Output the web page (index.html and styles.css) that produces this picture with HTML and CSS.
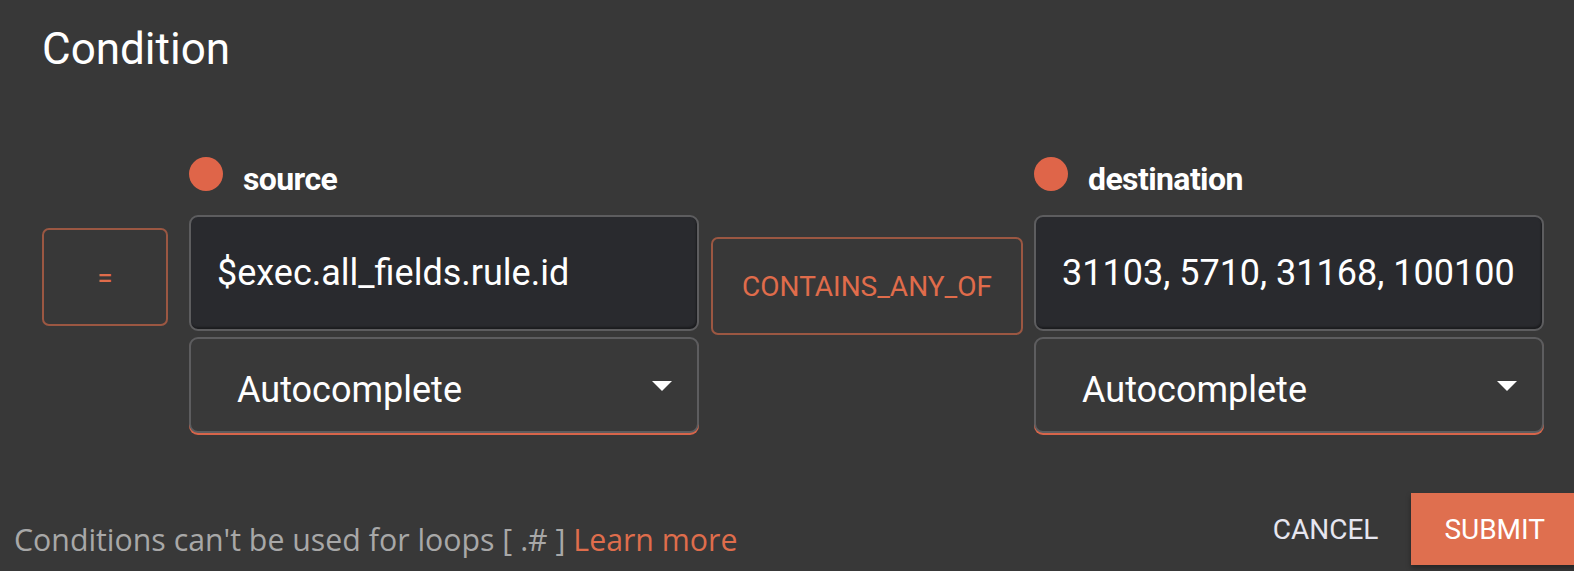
FILE: index.html
```html
<!DOCTYPE html>
<html lang="en">
<head>
<meta charset="utf-8">
<title>Condition</title>
<link rel="stylesheet" href="styles.css">
</head>
<body>
<div class="dialog">
  <h2 class="title">Condition</h2>
  <div class="row">
    <div class="op-box op-eq">=</div>
    <div class="field">
      <div class="label"><span class="dot"></span><span class="label-text">source</span></div>
      <div class="input">$exec.all_fields.rule.id</div>
      <div class="select"><span>Autocomplete</span><svg class="caret" width="20" height="10" viewBox="0 0 20 10"><path d="M0 0 L10 10 L20 0 Z" fill="#ffffff"/></svg></div>
    </div>
    <div class="op-box op-contains">CONTAINS_ANY_OF</div>
    <div class="field">
      <div class="label"><span class="dot"></span><span class="label-text">destination</span></div>
      <div class="input">31103, 5710, 31168, 100100</div>
      <div class="select"><span>Autocomplete</span><svg class="caret" width="20" height="10" viewBox="0 0 20 10"><path d="M0 0 L10 10 L20 0 Z" fill="#ffffff"/></svg></div>
    </div>
  </div>
  <div class="footer">
    <p class="hint">Conditions can't be used for loops [ .# ] <a class="learn" href="#">Learn more</a></p>
    <div class="actions">
      <button class="btn btn-cancel">CANCEL</button>
      <button class="btn btn-submit">SUBMIT</button>
    </div>
  </div>
</div>
</body>
</html>
```

FILE: styles.css
```css
* { box-sizing: border-box; }

html, body {
  margin: 0;
  padding: 0;
  background: #383838;
  overflow: hidden;
}

body {
  width: 1574px;
  height: 571px;
  font-family: Roboto, "Liberation Sans", sans-serif;
  color: #ffffff;
}

.dialog {
  width: 1574px;
  height: 571px;
  overflow: hidden;
  display: flex;
  flex-direction: column;
}

.title {
  margin: 27px 0 0 42px;
  font-size: 44px;
  line-height: 45px;
  font-weight: 400;
  color: #ffffff;
  height: 45px;
}

.row {
  display: flex;
  align-items: flex-start;
  margin-top: 85px;
  padding-left: 42px;
}

.op-box {
  border: 2px solid #9b5742;
  border-radius: 7px;
  color: #e06c4b;
  font-size: 28px;
  display: flex;
  align-items: center;
  justify-content: center;
  height: 98px;
}

.op-eq {
  width: 126px;
  margin-top: 71px;
  margin-right: 21px;
}

.op-contains {
  width: 312px;
  margin-top: 80px;
  margin-left: 12px;
  margin-right: 11px;
}

.field {
  width: 510px;
  display: flex;
  flex-direction: column;
}

.label {
  display: flex;
  align-items: flex-start;
  height: 34px;
}

.dot {
  width: 34px;
  height: 34px;
  border-radius: 50%;
  background: #df6549;
  flex: none;
}

.label-text {
  margin-left: 20px;
  margin-top: 5px;
  font-size: 32px;
  line-height: 34px;
  font-weight: 700;
  letter-spacing: -0.6px;
  color: #ffffff;
}

.input {
  margin-top: 24px;
  height: 116px;
  background: #292a2e;
  border: 2px solid #5d5d5f;
  border-radius: 9px;
  box-shadow: inset -1px -2px 2px rgba(0, 0, 0, 0.35);
  display: flex;
  align-items: center;
  padding-left: 26px;
  font-size: 36px;
  color: #ffffff;
  white-space: nowrap;
}

.select {
  margin-top: 6px;
  height: 96px;
  background: #393939;
  border: 2px solid #5d5d5f;
  border-radius: 9px;
  box-shadow: 0 2px 0 #d8654a;
  display: flex;
  align-items: center;
  justify-content: space-between;
  padding: 9px 25px 0 46px;
  font-size: 36px;
  color: #ffffff;
}

.caret {
  display: block;
  margin-top: -8px;
}

.footer {
  margin-top: 60px;
  margin-right: -4px;
  display: flex;
  align-items: flex-end;
  justify-content: space-between;
  padding-left: 14px;
}

.hint {
  margin: 0 0 5px 0;
  font-family: "Open Sans", "Noto Sans", sans-serif;
  font-size: 30.3px;
  color: #a8a8a8;
  white-space: nowrap;
}

.learn {
  color: #df6d4c;
  text-decoration: none;
}

.actions {
  display: flex;
  align-items: stretch;
}

.btn {
  font-family: Roboto, "Liberation Sans", sans-serif;
  font-size: 28px;
  font-weight: 400;
  border: none;
  height: 72px;
  padding: 0 33px;
  cursor: pointer;
}

.btn-cancel {
  background: transparent;
  color: #e6e6f0;
}

.btn-submit {
  background: #df6f4f;
  color: #ffffff;
  box-shadow: 0 3px 5px rgba(0, 0, 0, 0.35);
}
```
